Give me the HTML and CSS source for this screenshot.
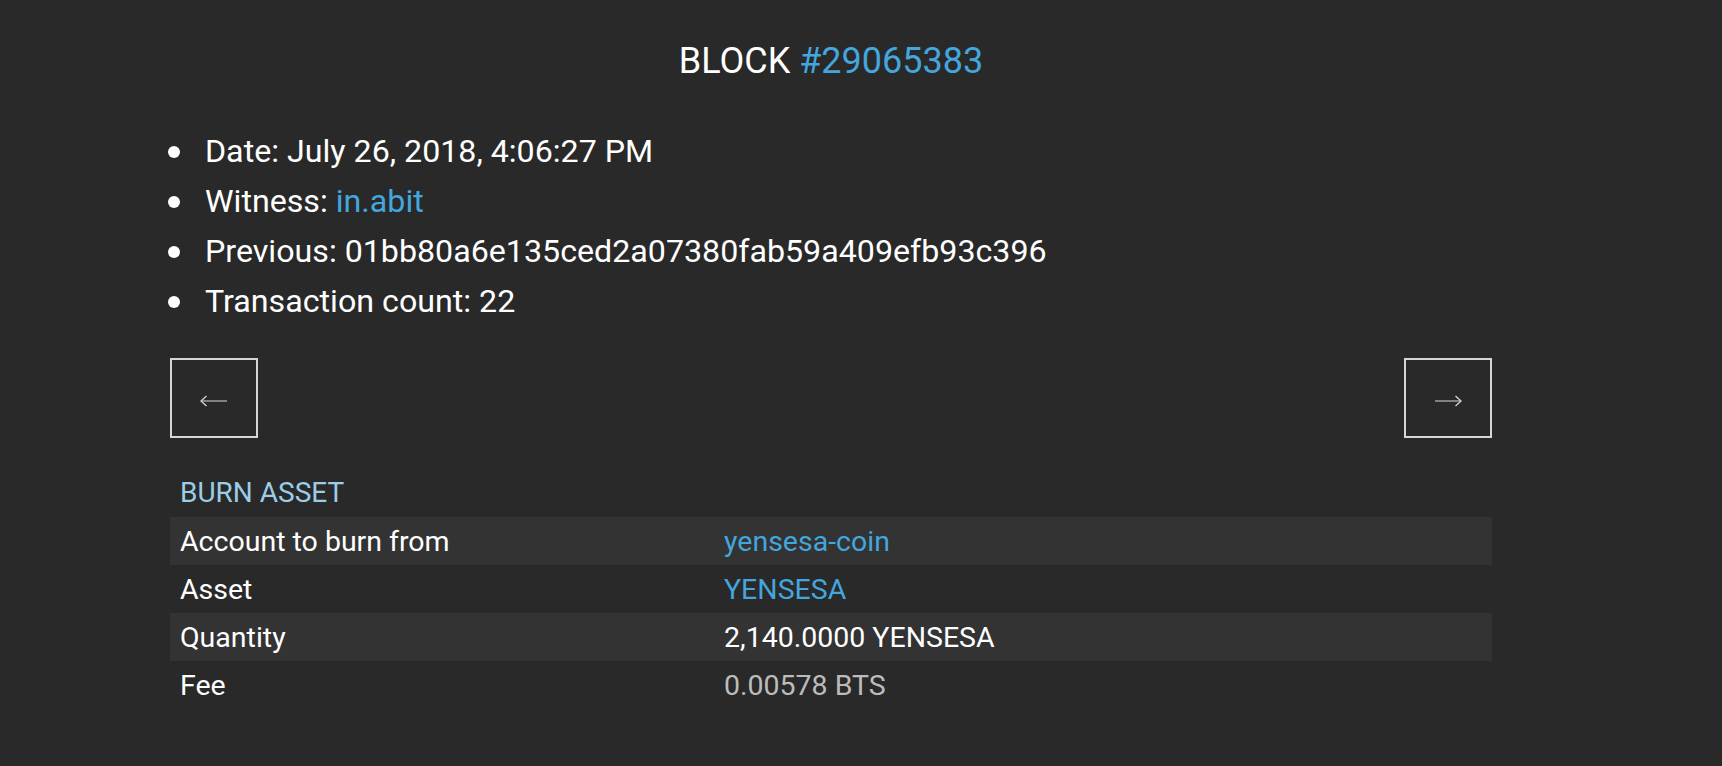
FILE: index.html
```html
<!DOCTYPE html>
<html>
<head>
<meta charset="utf-8">
<link rel="stylesheet" href="styles.css">
</head>
<body>
<div class="page">
  <h1 class="title">BLOCK <span class="link">#29065383</span></h1>
  <ul class="info">
    <li>Date: July 26, 2018, 4:06:27 PM</li>
    <li>Witness: <span class="link">in.abit</span></li>
    <li>Previous: 01bb80a6e135ced2a07380fab59a409efb93c396</li>
    <li>Transaction count: 22</li>
  </ul>
  <div class="nav">
    <button class="navbtn" aria-label="previous">
      <svg width="28" height="12" viewBox="0 0 28 12"><line x1="2" y1="6" x2="27" y2="6" stroke="#a8a8a8" stroke-width="1.4"/><path d="M6.5 1 L1 6 L6.5 11" fill="none" stroke="#cfcfcf" stroke-width="1.4"/></svg>
    </button>
    <button class="navbtn" aria-label="next">
      <svg width="28" height="12" viewBox="0 0 28 12"><line x1="1" y1="6" x2="26" y2="6" stroke="#a8a8a8" stroke-width="1.4"/><path d="M21.5 1 L27 6 L21.5 11" fill="none" stroke="#cfcfcf" stroke-width="1.4"/></svg>
    </button>
  </div>
  <div class="op">
    <div class="op-title">BURN ASSET</div>
    <div class="row alt"><div class="k">Account to burn from</div><div class="v link">yensesa-coin</div></div>
    <div class="row"><div class="k">Asset</div><div class="v link">YENSESA</div></div>
    <div class="row alt"><div class="k">Quantity</div><div class="v">2,140.0000 YENSESA</div></div>
    <div class="row"><div class="k">Fee</div><div class="v muted">0.00578 BTS</div></div>
  </div>
</div>
</body>
</html>
```

FILE: styles.css
```css
html, body {
  margin: 0;
  padding: 0;
  background: #292929;
  color: #ffffff;
  font-family: Roboto, "Liberation Sans", sans-serif;
}
.page {
  width: 1322px;
  margin-left: 170px;
  padding-top: 37px;
}
.title {
  margin: 0;
  font-weight: 400;
  font-size: 36px;
  line-height: 48px;
  text-align: center;
}
.link {
  color: #43a6dd;
}
.info {
  margin: 41px 0 0 0;
  padding: 0;
  list-style: none;
}
.info li {
  display: flex;
  align-items: center;
  font-size: 32.2px;
  line-height: 50px;
  white-space: pre;
}
.info li::before {
  content: "";
  flex: none;
  width: 12px;
  height: 12px;
  border-radius: 50%;
  background: #ffffff;
  margin-left: -2px;
  margin-right: 25px;
  margin-top: 2px;
}
.nav {
  display: flex;
  justify-content: space-between;
  margin-top: 32px;
}
.navbtn {
  width: 88px;
  height: 80px;
  box-sizing: border-box;
  border: 2px solid #d6d6d6;
  background: transparent;
  padding: 6px 0 0 0;
  display: flex;
  align-items: center;
  justify-content: center;
}
.navbtn svg {
  display: block;
}
.op {
  margin-top: 31px;
}
.op-title {
  height: 48px;
  line-height: 48px;
  padding-left: 10px;
  font-size: 28px;
  color: #9dcde6;
}
.row {
  display: flex;
  height: 48px;
  align-items: center;
  font-size: 28.5px;
}
.row.alt {
  background: #333333;
}
.k {
  width: 534px;
  padding-left: 10px;
}
.v {
  padding-left: 10px;
}
.muted {
  color: #bcbcbc;
}
```
